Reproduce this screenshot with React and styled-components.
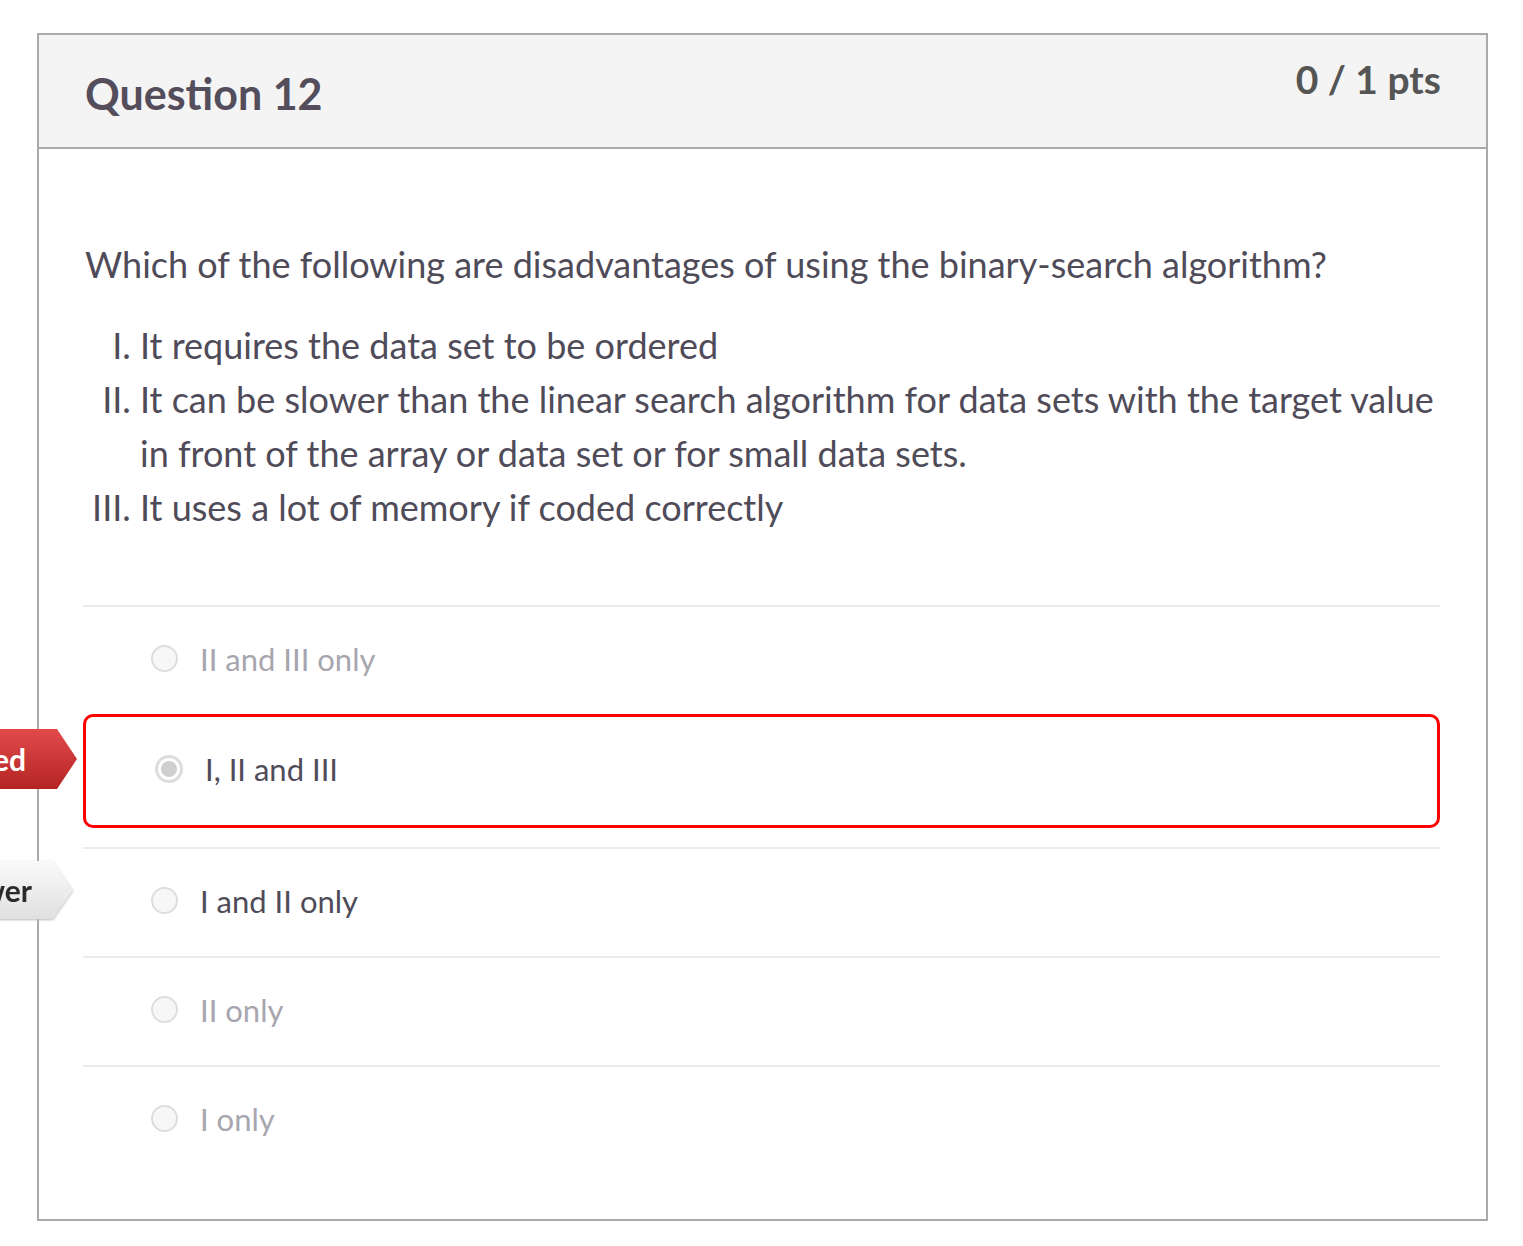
import styled, { createGlobalStyle } from "styled-components"

const GlobalStyle = createGlobalStyle`
  html, body {
    margin: 0;
    padding: 0;
    background: #fff;
    overflow-x: hidden;
  }
  body {
    font-family: Lato, "Liberation Sans", sans-serif;
  }
`;

const Page = styled.div`
  padding: 33px 0 24px 37px;
`;

const Card = styled.div`
  width: 1447px;
  border: 2px solid #aaa;
  background: #fff;
`;

const Header = styled.div`
  display: flex;
  justify-content: space-between;
  align-items: flex-start;
  height: 112px;
  padding: 0 45px 0 46px;
  background: #f4f4f4;
  border-bottom: 2px solid #aaa;
`;

const Title = styled.h2`
  margin: 0;
  padding-top: 33px;
  font-size: 43px;
  font-weight: 700;
  line-height: 1.2;
  color: #544d5b;
`;

const Points = styled.div`
  padding-top: 21px;
  font-size: 39px;
  font-weight: 700;
  line-height: 1.2;
  color: #555;
`;

const Body = styled.div`
  padding: 88px 46px 45px 44px;
`;

const Text = styled.p`
  margin: 0 0 0 2px;
  font-size: 36px;
  line-height: 54px;
  color: #4f4b59;
`;

const List = styled.ol`
  list-style-type: upper-roman;
  margin: 27px 0 0;
  padding-left: 57px;
  font-size: 36px;
  line-height: 54px;
  color: #4f4b59;
`;

const Answers = styled.div`
  margin-top: 71px;
`;

const Answer = styled.div`
  position: relative;
  display: flex;
  align-items: center;
  gap: 22px;
  box-sizing: border-box;
  height: ${p => (p.$selected ? "114px" : "109px")};
  padding: 0 0 4px ${p => (p.$selected ? "66px" : "68px")};
  border-top: 2px solid #ebebeb;
  ${p =>
    p.$selected &&
    `
    border: 3px solid #f00;
    border-radius: 10px;
    margin-bottom: 19px;
  `}
`;

const Radio = styled.span`
  flex: none;
  position: relative;
  width: 23px;
  height: 23px;
  border-radius: 50%;
  border: 2px solid #ddd;
  background: ${p => (p.$checked ? "#fff" : "#f7f7f7")};
  margin-left: ${p => (p.$checked ? "3px" : "0")};

  ${p =>
    p.$checked &&
    `
    border-width: 3px;
    width: 22px;
    height: 22px;
    &::after {
      content: "";
      position: absolute;
      inset: 3px;
      border-radius: 50%;
      background: #cfcfcf;
    }
  `}
`;

const Label = styled.span`
  font-size: 31px;
  line-height: 54px;
  color: ${p => (p.$muted ? "#a7a6ae" : "#4f4b59")};
`;

const TagWrap = styled.div`
  position: absolute;
  right: calc(100% + ${p => (p.$variant === "red" ? "9px" : "10px")});
  top: ${p => p.$top};
  filter: ${p => (p.$variant === "red" ? "none" : "drop-shadow(0 1px 1px #bbb)")};
`;

const Tag = styled.div`
  height: ${p => (p.$variant === "red" ? "60px" : "58px")};
  padding: 0 ${p => (p.$variant === "red" ? "51px" : "41px")} 0 30px;
  display: flex;
  align-items: center;
  white-space: nowrap;
  font-size: 30px;
  font-weight: 700;
  clip-path: polygon(0 0, calc(100% - 20px) 0, 100% 50%, calc(100% - 20px) 100%, 0 100%);
  color: ${p => (p.$variant === "red" ? "#fff" : "#2a2a2a")};
  background: ${p =>
    p.$variant === "red"
      ? "linear-gradient(#e24a4a, #b42424)"
      : "linear-gradient(#fafafa, #e0e0e0)"};
`;

const answers = [
  { text: "II and III only", muted: true },
  { text: "I, II and III", selected: true, tag: { label: "You Answered", variant: "red", top: "12px" } },
  { text: "I and II only", tag: { label: "Correct Answer", variant: "gray", top: "12px" } },
  { text: "II only", muted: true },
  { text: "I only", muted: true },
]

const App = () => {
  return (
    <Page>
      <GlobalStyle />
      <Card>
        <Header>
          <Title>Question 12</Title>
          <Points>0 / 1 pts</Points>
        </Header>
        <Body>
          <Text>Which of the following are disadvantages of using the binary-search algorithm?</Text>
          <List>
            <li>It requires the data set to be ordered</li>
            <li>It can be slower than the linear search algorithm for data sets with the target value in front of the array or data set or for small data sets.</li>
            <li>It uses a lot of memory if coded correctly</li>
          </List>
          <Answers>
            {answers.map(a => (
              <Answer key={a.text} $selected={a.selected}>
                {a.tag && (
                  <TagWrap $top={a.tag.top} $variant={a.tag.variant}>
                    <Tag $variant={a.tag.variant}>{a.tag.label}</Tag>
                  </TagWrap>
                )}
                <Radio $checked={a.selected} />
                <Label $muted={a.muted}>{a.text}</Label>
              </Answer>
            ))}
          </Answers>
        </Body>
      </Card>
    </Page>
  )
}

export default App
